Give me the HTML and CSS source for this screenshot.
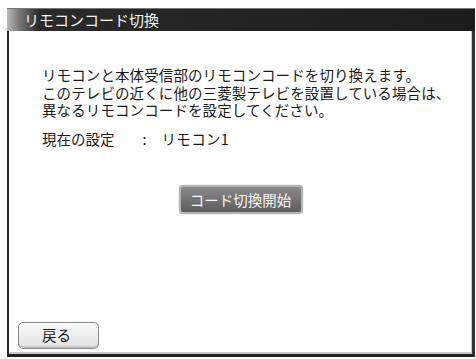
FILE: index.html
```html
<!DOCTYPE html>
<html lang="ja">
<head>
    <meta charset="UTF-8">
    <title>リモコンコード切換</title>
    <link rel="stylesheet" href="styles.css">
</head>
<body>
<div class="screen">
    <div class="titlebar">リモコンコード切換</div>
    <div class="panel">
        <div class="msg">
            <p>リモコンと本体受信部のリモコンコードを切り換えます。</p>
            <p>このテレビの近くに他の三菱製テレビを設置している場合は、</p>
            <p>異なるリモコンコードを設定してください。</p>
        </div>
        <div class="current">
            <span class="label">現在の設定</span><span class="colon">:</span><span class="value">リモコン1</span>
        </div>
        <div class="action">
            <span class="btn-start">コード切換開始</span>
        </div>
        <div class="footer">
            <span class="btn-back">戻る</span>
        </div>
    </div>
</div>
</body>
</html>
```

FILE: styles.css
```css
* {
    margin: 0;
    padding: 0;
    box-sizing: border-box;
}

body {
    background-color: #fff;
    font-family: "Noto Sans CJK JP", "Noto Sans", sans-serif;
    color: #1a1a1a;
}

.screen {
    width: 476px;
    height: 359px;
    padding: 8px 1px 0 7px;
}

.titlebar {
    height: 23px;
    line-height: 22px;
    padding-left: 17px;
    font-size: 15px;
    color: #f4f4f4;
    background: linear-gradient(to right, #b8b8b8 0, #7a7a7a 12px, #2a2a2a 32px, #1c1c1c 100%);
    border-top: 1px solid #777;
}

.panel {
    display: flex;
    flex-direction: column;
    height: 326px;
    border-left: 2px solid #2a2a2a;
    border-right: 3px solid #333;
    border-bottom: 3px solid #222;
    box-shadow: inset -1px -2px 0 #c8c8c8;
}

.msg {
    padding: 35px 0 0 33px;
    font-size: 14.5px;
    letter-spacing: 0.1px;
    line-height: 17.5px;
}

.current {
    padding: 11px 0 0 33px;
    font-size: 14.5px;
    line-height: 17.5px;
}

.current .colon {
    margin: 0 0 0 28px;
}

.current .value {
    margin-left: 15px;
    letter-spacing: 0.3px;
}

.action {
    padding-top: 38px;
    text-align: center;
}

.btn-start {
    display: inline-block;
    width: 124px;
    height: 29px;
    line-height: 25px;
    font-size: 14.5px;
    color: #f6f6f6;
    border: 2px solid #b4b4b4;
    border-radius: 4px;
    background: linear-gradient(#8a8a8a, #5c5c5c);
    box-shadow: 0 0 1px #888;
}

.footer {
    margin-top: auto;
    padding: 0 0 5px 9px;
}

.btn-back {
    display: inline-block;
    width: 81px;
    height: 27px;
    line-height: 24px;
    padding-left: 23px;
    font-size: 14.5px;
    color: #1a1a1a;
    border: 1px solid #8c8c8c;
    border-radius: 5px;
    background: linear-gradient(#fafafa, #e2e2e2);
    box-shadow: inset 0 -2px 0 #c6c6c6;
}
```
